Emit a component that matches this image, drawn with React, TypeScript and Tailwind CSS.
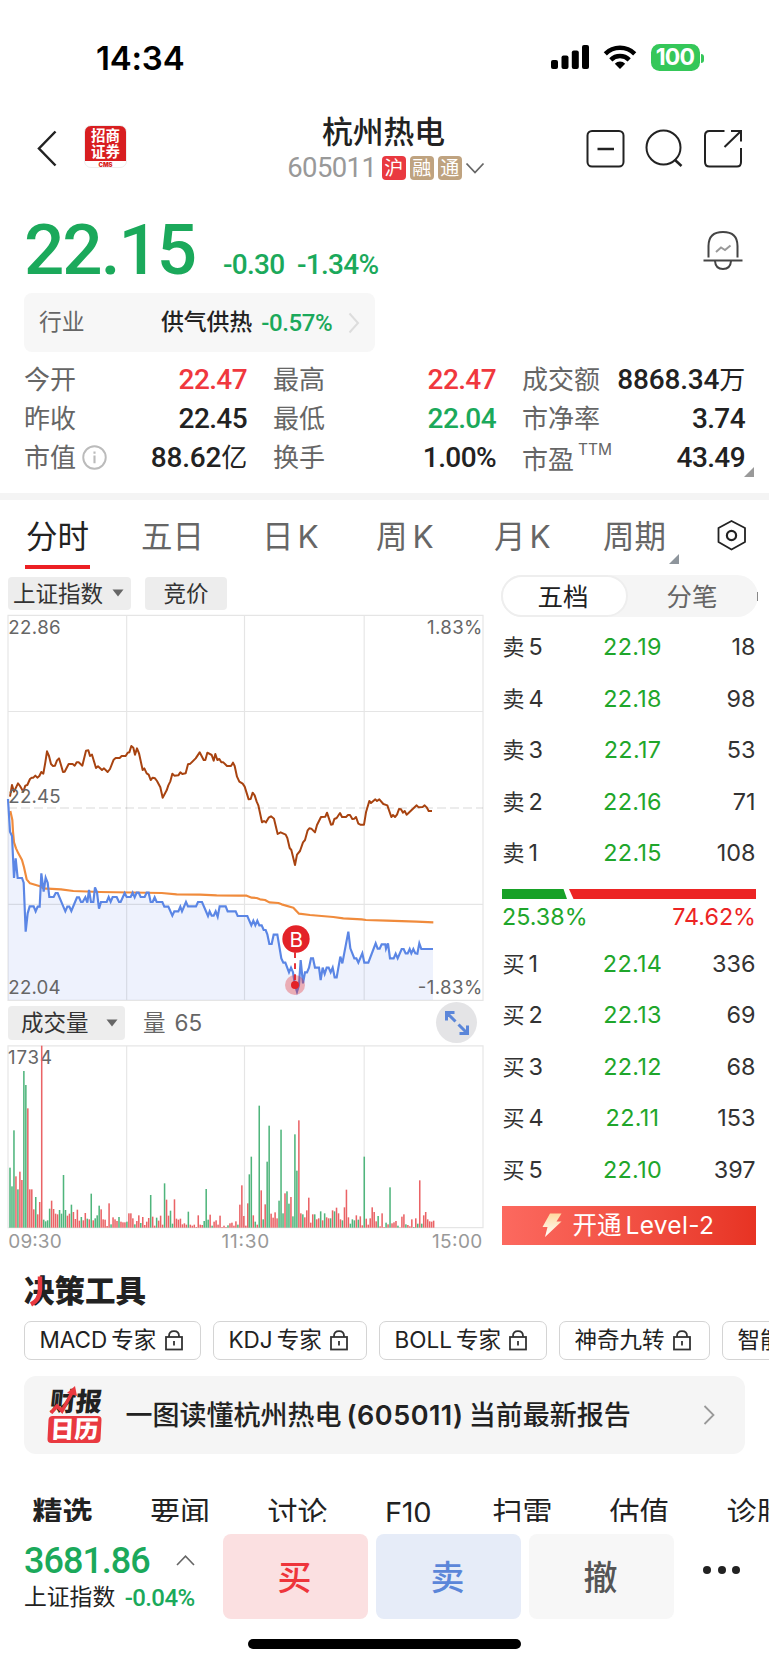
import React from "react";

const SANS = "font-['Inter','Noto_Sans_CJK_SC',sans-serif]";
const NUM = "font-['Roboto','Noto_Sans_CJK_SC',sans-serif]";

const INDEX_AM =
  "30,560 36,525 42,545 54,520 60,528 70,545 76,527 82,525 90,507 95,503 100,503 106,497 112,503 118,498 124,486 130,491 136,457 141,424 147,438 153,462 159,468 165,467 171,451 177,445 183,465 189,486 194,485 206,462 218,462 224,467 230,457 236,457 247,467 258,422 265,421 270,438 276,434 288,474 294,469 306,480 312,475 323,486 330,477 341,449 347,444 359,444 365,438 377,438 383,428 388,427 394,408 400,413 405,434 411,415 417,430 428,480 433,475 440,490 446,494 452,510 458,503 465,505 471,513 481,532 488,563 500,541 505,526 511,514 517,491 523,497 535,496 541,487 547,492 557,490 564,463 571,461 587,445 599,427 611,450 616,450 622,428 635,435 641,452 646,432 652,450 658,447 664,457 670,457 681,468 693,468 699,458 704,468 711,500 718,515";
const INDEX_PM =
  "8,521 14,530 26,568 32,567 38,548 44,556 50,575 55,586 66,637 72,633 78,637 86,623 93,619 102,626 113,672 122,667 137,674 142,684 149,714 154,720 165,765 171,734 180,723 189,697 195,690 203,661 208,655 214,656 225,667 231,645 243,621 256,620 261,608 273,644 278,643 283,627 290,624 300,609 306,621 318,621 324,615 330,615 337,627 343,626 348,621 355,641 361,644 372,644 378,607 388,573 393,579 406,568 411,573 418,568 430,582 442,586 454,621 459,615 465,621 471,614 477,597 483,598 489,608 494,603 500,614 530,586 536,592 548,591 554,586 560,592 566,603 576,603";
const AVG_AM =
  "31,603 37,630 39,665 42,697 48,715 55,730 66,750 72,772 80,808 90,820 120,829 130,835 183,838 220,843 300,846 485,849 530,853 600,854 650,856 715,857";
const AVG_PM =
  "20,857 35,863 50,864 60,868 75,870 88,877 115,879 125,883 160,893 177,911 210,915 280,921 310,925 365,928 378,930 440,932 530,935 580,937";
const PRICE_AM =
  "24,567 30,665 36,678 42,804 47,745 53,804 66,804 71,818 77,965 83,910 89,889 101,889 107,904 113,890 119,890 124,790 131,845 137,803 143,818 148,861 161,861 167,849 173,849 196,904 202,890 208,890 214,903 231,862 237,862 243,876 248,876 256,862 262,878 267,840 273,876 280,876 285,832 291,847 297,896 303,876 320,876 326,861 332,875 338,861 350,861 357,876 362,876 374,849 380,861 392,861 398,848 404,862 410,848 416,848 422,861 434,861 440,848 446,848 452,876 458,876 464,862 470,876 487,876 493,890 505,890 517,917 523,904 535,904 541,890 546,904 558,876 564,889 588,889 594,876 606,876 624,918 629,904 635,917 641,917 647,904 653,920 659,889 677,889 683,904 707,904 713,918";
const PRICE_PM =
  "22,918 34,946 40,932 46,946 52,932 58,946 65,946 71,960 77,960 82,973 88,1002 95,1002 101,974 112,974 124,1045 130,1058 136,1058 147,1087 153,1073 159,1087 165,1125 171,1145 177,1125 182,1050 189,1120 195,1087 201,1087 207,1073 213,1045 219,1045 225,1073 237,1073 242,1110 248,1073 254,1092 260,1073 266,1073 272,1087 278,1073 284,1102 290,1102 301,1040 307,1060 325,965 331,1015 343,1045 349,1045 355,1058 367,1030 373,1058 385,1058 407,1000 413,1016 419,1016 425,1003 436,1003 438,1016 444,1000 450,1045 461,1045 467,1031 473,1045 485,1017 491,1017 497,1030 503,1030 509,1017 514,1030 520,1017 526,1030 532,1031 538,1000 544,1017 579,1017";

const join = (am: string, pm: string) =>
  am + " " + pm.split(" ").map((p) => {
    const [x, y] = p.split(",").map(Number);
    return `${x + 720},${y}`;
  }).join(" ");

const INDEX = join(INDEX_AM, INDEX_PM);
const AVG = join(AVG_AM, AVG_PM);
const PRICE = join(PRICE_AM, PRICE_PM);

const VOL_AM =
  "180g 124g 292g 154r 115g 168r 143r 470g 428g 358r 115r 115r 55r 92g 40r 77r 546r 24g 19g 22g 57g 81r 56r 42r 40r 53g 42g 158g 53g 36r 42r 69g 47r 26r 54r 21r 32g 22r 44r 27g 25r 102g 22r 28g 37g 66g 55r 25r 24r 5r 73r 10g 31r 25r 20r 32g 18r 16r 16r 18g 43r 43r 28r 10g 20r 37r 14g 32r 8r 18r 29r 98g 33r 6r 30g 21r 36r 9r 133g 84r 36r 51g 12g 85r 27r 24r 27r 10r 13r 9r 48g 9r 6r 9r 2r 37r 9r 8r 20g 116g 24g 39r 6g 18r 22r 9r 36r 2r 6r 2r 7g 13r 15r 6r 19r 9g 69r 127r 35r 6r 73r";
const VOL_PM =
  "160g 213g 37r 18g 9r 366g 112r 25g 70r 198g 306g 42r 30r 46r 28r 81g 294g 43g 103r 109g 72g 92r 34g 280g 171g 322r 43r 40g 31r 52r 90r 15r 40r 40g 25r 28r 49g 22r 43g 31r 28r 28g 52r 49g 60r 43r 25r 22g 61r 114r 31r 12g 25g 22g 37r 24g 34r 7r 213g 27r 9r 28r 61r 47r 19r 35g 4r 43r 2r 15g 10r 121g 13r 16r 20r 6g 1r 33r 40r 10g 8r 4r 25r 2g 28r 12g 142r 12g 37r 47r 25r 19r 18r 21r";

function bars(src: string, x0: number) {
  return src.split(" ").map((s, i) => {
    const h = parseInt(s, 10);
    return (
      <rect
        key={x0 + i}
        x={x0 + i * 5.945 - 2.3}
        y={682 - h}
        width={4.6}
        height={h}
        fill={s.endsWith("g") ? "#4fb57c" : "#ea6366"}
      />
    );
  });
}

function StatusBar() {
  return (
    <div className="flex h-[108px] pt-[38px] pl-[96px] pr-[65px] justify-between">
      <div className="h-[40px] text-[33px] leading-[40px] font-semibold text-black tracking-[-0.2px]">14:34</div>
      <div className="flex h-[40px] items-center">
        <svg width="38" height="24" viewBox="0 0 38 24" className="-mt-[2px]">
          <rect x="0" y="15" width="7" height="9" rx="2" />
          <rect x="10.5" y="10.5" width="7" height="13.500" rx="2" />
          <rect x="20.800" y="5.500" width="7" height="18.500" rx="2" />
          <rect x="31" y="0" width="7" height="24" rx="2" />
        </svg>
        <svg width="34" height="25" viewBox="0 0 34 25" className="ml-[14px] -mt-[2px]" fill="none" stroke="#000" strokeWidth="4.500">
          <path d="M2.300 8.800 A21 21 0 0 1 31.700 8.800" />
          <path d="M7.800 14.800 A13.200 13.200 0 0 1 26.200 14.800" />
          <path d="M17 24 L11.800 18.700 A7.500 7.500 0 0 1 22.200 18.700 Z" fill="#000" stroke="none" />
        </svg>
        <div className="ml-[14px] -mt-[1px] flex h-[27px] w-[49px] items-center justify-center rounded-[8.5px] bg-[#35c759] text-[23px] font-bold leading-none text-white tracking-[-0.8px]">100</div>
        <div className="ml-[1.5px] h-[9px] w-[3px] rounded-r-full bg-[#35c759]" />
      </div>
    </div>
  );
}

function Header() {
  const badge = "flex h-[24px] w-[24px] items-center justify-center rounded-[4px] text-[19px] leading-none text-white";
  return (
    <div className="flex h-[92px] pl-[36px] pr-[26px]">
      <svg width="22" height="38" viewBox="0 0 22 38" className="mt-[21px]" fill="none" stroke="#222" strokeWidth="2.500">
        <path d="M19.500 2.500 L3 19.500 L19.500 36.500" />
      </svg>
      <div className="ml-[26px] mt-[17px] flex h-[43px] w-[43px] flex-col items-center overflow-hidden rounded-[7px] border border-[#eee] bg-gradient-to-b from-[#d81e20] from-85% to-white to-85% pt-[2px]">
        <div className="text-[14.500px] font-bold leading-[16px] text-white">招商</div>
        <div className="text-[14.500px] font-bold leading-[16px] text-white">证券</div>
        <div className="mt-[1.500px] text-[6px] font-black leading-[6px] text-[#d81e20]">CMS</div>
      </div>
      <div className="ml-[155px] flex w-[206px] flex-col items-center">
        <div className="-ml-[3px] mt-[4px] h-[39px] text-[30.800px] font-medium leading-[40px] text-[#222]">杭州热电</div>
        <div className={`ml-[2px] flex h-[30px] mt-[2px] items-center gap-[4px] ${NUM}`}>
          <span className="mr-[1.500px] text-[27.500px] leading-[32px] tracking-[-0.600px] text-[#999]">605011</span>
          <span className={`${badge} bg-[#e93940]`}>沪</span>
          <span className={`${badge} bg-[#bfa380]`}>融</span>
          <span className={`${badge} bg-[#bfa380]`}>通</span>
          <svg width="20" height="12" viewBox="0 0 20 12" className="-ml-[1px]" fill="none" stroke="#666" strokeWidth="1.800"><path d="M1.500 1.500 L10 10.500 L18.500 1.500" /></svg>
        </div>
      </div>
      <div className="ml-auto mt-[20px] flex gap-[18.500px]">
        <svg width="40" height="40" viewBox="0 0 40 40" fill="none" stroke="#222" strokeWidth="2">
          <rect x="1.500" y="3" width="36" height="35.500" rx="4.500" /><path d="M11.500 21 H28" strokeWidth="2.500" />
        </svg>
        <svg width="40" height="40" viewBox="0 0 40 40" fill="none" stroke="#222" strokeWidth="2">
          <circle cx="18.500" cy="19.500" r="17" /><path d="M29.500 31.500 L36.500 38" strokeWidth="2.500" />
        </svg>
        <svg width="40" height="40" viewBox="0 0 40 40" fill="none" stroke="#222" strokeWidth="2">
          <path d="M21.500 3 H6.500 Q2 3 2 7.500 V34 Q2 38.500 6.500 38.500 H34 Q38 38.500 38 34 V20" /><path d="M28 3 H38 V13.500 M37.500 3.500 L21.500 19" />
        </svg>
      </div>
    </div>
  );
}

function PriceBlock() {
  return (
    <div className={`flex h-[93px] pl-[24px] pr-[25px] text-[#1ba95b] ${NUM}`}>
      <div className="w-[199px] text-[71px] font-medium leading-[99px] tracking-[-2px]">22.15</div>
      <div className="mt-[45px] w-[74px] text-[28px] leading-[40px] font-medium tracking-[-0.700px]">-0.30</div>
      <div className="mt-[45px] text-[28px] leading-[40px] font-medium tracking-[-0.700px]">-1.34%</div>
      <svg width="42" height="42" viewBox="0 0 42 42" className="ml-auto mt-[30px]" fill="none" stroke="#444" strokeWidth="2">
        <path d="M6.500 27.500 V16 Q6.500 2 21 2 Q35.500 2 35.500 16 V27.500" />
        <path d="M1.500 30.500 H40.500" /><path d="M13 31 Q13.500 39 21 39 Q28.500 39 29 31" />
        <path d="M14 22 L19 17.500 L23 20 L28.500 15.500" stroke="#999" />
      </svg>
    </div>
  );
}

function Stat({ label, value, color = "text-[#222]", unit }: { label: React.ReactNode; value: string; color?: string; unit?: string }) {
  const tracking = unit ? "tracking-[-0.200px]" : "tracking-[-0.600px]";
  return (
    <div className="flex h-[39px] items-center justify-between">
      <span className="flex items-center text-[26px] leading-none text-[#666]">{label}</span>
      <span className={`text-[28px] leading-none font-medium ${tracking} ${NUM} ${color}`}>
        {value}{unit && <span className="text-[26px] font-normal">{unit}</span>}
      </span>
    </div>
  );
}

function Stats() {
  const red = "text-[#f0383e]", green = "text-[#1ba95b]";
  return (
    <div className="relative h-[141px] pl-[24px] pr-[24px]">
      <div className="grid grid-cols-3 gap-x-[26px] pt-[8px]">
        <Stat label="今开" value="22.47" color={red} />
        <Stat label="最高" value="22.47" color={red} />
        <Stat label="成交额" value="8868.34" unit="万" />
        <Stat label="昨收" value="22.45" />
        <Stat label="最低" value="22.04" color={green} />
        <Stat label="市净率" value="3.74" />
        <Stat
          label={<>市值<svg width="25" height="25" viewBox="0 0 26 26" className="ml-[5.500px]" fill="none" stroke="#bbb" strokeWidth="2"><circle cx="13" cy="13" r="11.700" /><path d="M13 11 V19 M13 6.800 V9" strokeWidth="2.200" /></svg></>}
          value="88.62" unit="亿"
        />
        <Stat label="换手" value="1.00%" />
        <Stat label={<span className="mt-[4px] flex">市盈<span className="-mt-[5px] ml-[4px] text-[15.500px] leading-none">TTM</span></span>} value="43.49" />
      </div>
      <svg width="10" height="10" className="absolute left-[744px] top-[115px]"><path d="M10 0 V10 H0 Z" fill="#999" /></svg>
    </div>
  );
}

function PeriodTabs() {
  const t = "text-[31.500px] leading-[74px] text-[#666]";
  return (
    <div className="flex h-[73px] pl-[25px]">
      <div className="w-[116px]">
        <div className="inline-flex h-[69px] flex-col border-b-[4px] border-[#ec2024] px-[1px] text-[31.500px] leading-[74px] text-[#222]">分时</div>
      </div>
      <div className={`${t} w-[121px]`}>五日</div>
      <div className={`${t} w-[114px]`}>日<span className="ml-[4px]">K</span></div>
      <div className={`${t} w-[118px]`}>周<span className="ml-[5px]">K</span></div>
      <div className={`${t} w-[109px]`}>月<span className="ml-[4px]">K</span></div>
      <div className={`${t} flex w-[114px]`}>周期
        <svg width="10" height="10" className="ml-[3px] mt-[54px]"><path d="M10 0 V10 H0 Z" fill="#8e959c" /></svg>
      </div>
      <svg width="30" height="32" viewBox="0 0 30 32" className="mt-[19px]" fill="none" stroke="#222" strokeWidth="1.800">
        <path d="M14.500 2 L28 9 V23 L14.500 30.500 L1.500 23 V9 Z" strokeLinejoin="round" /><circle cx="14.500" cy="16.500" r="4.600" strokeWidth="2.200" />
      </svg>
    </div>
  );
}

const Caret = ({ className = "" }: { className?: string }) => (
  <svg width="12" height="8" className={className}><path d="M0.500 0.500 H11.500 L6 7.500 Z" fill="#666" /></svg>
);

function PriceChart() {
  return (
    <svg width="490" height="392" viewBox="0 0 1470 1176" className="block">
      <polygon points={`24,1170 ${PRICE} 1299,1170`} fill="#eef2fd" />
      <g stroke="#000" strokeOpacity="0.100" strokeWidth="3.500" fill="none">
        <path d="M24 16 H1449 V1171 H24 Z M24 304.500 H1449 M24 883 H1449 M380 16 V1171 M733.500 16 V1171 M1092.500 16 V1171" />
        <path d="M24 594 H1449" strokeDasharray="27 12" strokeWidth="5" />
      </g>
      <polyline points={INDEX} fill="none" stroke="#a84310" strokeWidth="6" strokeLinejoin="round" />
      <polyline points={AVG} fill="none" stroke="#f08b3c" strokeWidth="6.500" strokeLinejoin="round" />
      <polyline points={PRICE} fill="none" stroke="#5b86e5" strokeWidth="6.500" />
      <circle cx="885" cy="1125" r="30" fill="#e32228" fillOpacity="0.330" />
      <circle cx="885" cy="1125" r="12" fill="#e32228" />
      <path d="M885 1027 V1125" stroke="#e32228" strokeWidth="5.500" strokeDasharray="17 16" />
      <circle cx="888" cy="987" r="41" fill="#e32228" />
      <g className={SANS} fontSize="56" fill="#666">
        <text x="889" y="1010" textAnchor="middle" fill="#fff" fontSize="62">B</text>
        <text x="25" y="71" textLength="157">22.86</text>
        <text x="25" y="578" textLength="157">22.45</text>
        <text x="25" y="1152" textLength="157">22.04</text>
        <text x="1281" y="71" textLength="166">1.83%</text>
        <text x="1253" y="1152" textLength="194">-1.83%</text>
      </g>
    </svg>
  );
}

function VolumeChart() {
  return (
    <svg width="490" height="215" viewBox="0 128 1470 645" className="block">
      <path d="M24 136.500 H1449 V682 H24 Z M380 136 V682 M733.500 136 V682 M1092.500 136 V682" fill="none" stroke="#000" strokeOpacity="0.100" strokeWidth="3.500" />
      <g className={SANS} fontSize="56" fill="#666"><text x="24" y="191" textLength="132">1734</text></g>
      {bars(VOL_AM, 30)}
      {bars(VOL_PM, 748)}
      <g className={SANS} fontSize="57" fill="#999">
        <text x="25" y="744" textLength="160">09:30</text>
        <text x="736" y="744" textAnchor="middle" textLength="143">11:30</text>
        <text x="1296" y="744" textLength="151">15:00</text>
      </g>
    </svg>
  );
}

function ChartColumn() {
  return (
    <div className="w-[490px]">
      <div className="flex h-[37px] pl-[8px] pt-[4px] gap-[14px] text-[22.500px] leading-[33px] text-[#333]">
        <div className="flex h-[32.500px] w-[123px] items-center rounded-[4px] bg-[#ededed] pl-[5px]">上证指数<Caret className="ml-[9px]" /></div>
        <div className="h-[32.500px] w-[82px] rounded-[4px] bg-[#ededed] text-center">竞价</div>
      </div>
      <PriceChart />
      <div className="flex h-[41px] items-center pl-[8px] text-[22.500px] text-[#333]">
        <div className="mt-[1px] flex h-[34px] w-[117px] items-center rounded-[4px] bg-[#ededed] pl-[13px]">成交量<Caret className="ml-[17px]" /></div>
        <div className="ml-[18px] mt-[1px] text-[#666]">量<span className="ml-[9px]">65</span></div>
        <div className="mr-[13px] ml-auto flex h-[41px] w-[41px] items-center justify-center rounded-full bg-[#e4e4e6]">
          <svg width="24" height="24" viewBox="0 0 24 24" fill="none" stroke="#5b86d9" strokeWidth="3">
            <path d="M1.500 9.500 V1.500 H9.500 M2 2 L10.500 10.500 M22.500 14.500 V22.500 H14.500 M22 22 L13.500 13.500" />
          </svg>
        </div>
      </div>
      <VolumeChart />
    </div>
  );
}

function Book({ side, rows }: { side: string; rows: [number, string, number][] }) {
  return (
    <div>
      {rows.map(([n, p, v]) => (
        <div key={n} className="flex h-[51.500px] items-center text-[23.400px] leading-none text-[#333]">
          <span className="w-[80px] pl-[1px] text-[22px]">{side}<span className="ml-[4px] text-[23.400px]">{n}</span></span>
          <span className="w-[102px] text-center tracking-[0.300px] text-[#1fa62b]">{p}</span>
          <span className="flex-1 pr-[0.500px] text-right">{v}</span>
        </div>
      ))}
    </div>
  );
}

function OrderColumn() {
  return (
    <div className="w-[258px] pl-[11.500px]">
      <div className="-ml-[1px] mt-[2px] flex h-[42px] w-[257px] rounded-full bg-[#f5f5f5] text-[25.500px]">
        <div className="h-[42px] w-[127px] rounded-full border-2 border-[#eee] bg-white pr-[2px] text-center leading-[39px] text-[#222]">五档</div>
        <div className="flex-1 text-center leading-[43px] text-[#666]">分笔</div>
        <div className="mt-[17px] h-[9px] w-px bg-[#888]" />
      </div>
      <div className="w-[254.500px]">
        <div className="pt-[4px]"><Book side="卖" rows={[[5, "22.19", 18], [4, "22.18", 98], [3, "22.17", 53], [2, "22.16", 71], [1, "22.15", 108]]} /></div>
        <svg width="254" height="10" className="mt-[10.500px] block">
          <path d="M0 0 H61.500 L65 10 H0 Z" fill="#17a127" /><path d="M67 0 H254 V10 H71.500 Z" fill="#ec2424" />
        </svg>
        <div className="mt-[4px] flex h-[28px] items-center justify-between pl-[0.500px] text-[23.300px]">
          <span className="text-[#1fa62b]">25.38%</span><span className="text-[#ec2424]">74.62%</span>
        </div>
        <div className="pt-[6.500px]"><Book side="买" rows={[[1, "22.14", 336], [2, "22.13", 69], [3, "22.12", 68], [4, "22.11", 153], [5, "22.10", 397]]} /></div>
        <div className="mt-[10.500px] flex h-[39px] w-[254px] items-center bg-gradient-to-r from-[#fc695f] to-[#e73323] pl-[40px] text-[24.500px] leading-none text-white">
          <svg width="20" height="24" viewBox="0 0 20 24" className="mr-[11px]"><defs><linearGradient id="bolt" x1="0" x2="0" y1="0" y2="1"><stop offset="0" stopColor="#ffd9a0" /><stop offset="1" stopColor="#fff" /></linearGradient></defs><path d="M8 0.500 H19.500 L14.500 8.500 H19.500 L3 24 L5.500 14 H0.500 Z" fill="url(#bolt)" /></svg>
          开通<span className="ml-[4px] tracking-[0.300px]">Level-2</span>
        </div>
      </div>
    </div>
  );
}

function ToolChip({ latin, label, w }: { latin?: string; label: string; w: string }) {
  return (
    <div className={`flex h-[39px] shrink-0 items-center whitespace-nowrap rounded-[7px] border-[1.500px] border-[#d4d4d4] pl-[14.500px] text-[22.500px] leading-none text-[#222] ${w}`}>
      {latin && <span className="mr-[4px]">{latin}</span>}{label}
      <svg width="18" height="21" viewBox="0 0 18 21" className="ml-[8.500px] shrink-0" fill="none" stroke="#333" strokeWidth="1.800"><rect x="1" y="7" width="16" height="12.500" /><path d="M4 7 V6 Q4 1.200 9 1.200 Q14 1.200 14 6 V7 M9 11 V15.500" /></svg>
    </div>
  );
}

function Tools() {
  return (
    <div className="h-[217px] overflow-hidden pl-[24px] pt-[1px]">
      <div className="relative h-[61px] text-[30.500px] font-black leading-[62px] text-[#222]">
        决策工具
        <svg width="30" height="32" viewBox="0 0 30 32" className="absolute -left-[1px] top-[15px]" fill="none" stroke="#e93940" strokeWidth="4.500"><path d="M17 1.500 V15 Q16.500 25 8 29.500" /></svg>
      </div>
      <div className="flex gap-[12px]">
        <ToolChip latin="MACD" label="专家" w="w-[177px]" />
        <ToolChip latin="KDJ" label="专家" w="w-[154px]" />
        <ToolChip latin="BOLL" label="专家" w="w-[168px]" />
        <ToolChip label="神奇九转" w="w-[151px]" />
        <ToolChip label="智能盯盘" w="w-[151px]" />
      </div>
      <div className="mt-[16px] flex h-[78px] w-[721px] items-center rounded-[12px] bg-[#f5f5f5] pl-[24px]">
        <div className="relative w-[56px]">
          <div className="h-[27px] -skew-x-6 pl-[2px] text-[26px] font-black leading-[27px] text-[#222]">财报</div>
          <div className="mt-[1px] flex h-[27px] w-[53px] -skew-x-3 items-center justify-center rounded-[4px] bg-[#e93940] text-[24px] font-black leading-none text-white">日历</div>
          <svg width="30" height="28" viewBox="0 0 30 28" className="absolute left-[1px] -top-[2px]" fill="none" stroke="#e93940" strokeWidth="3.500"><path d="M2 27 L8 20 L13 25 L24 5" /><path d="M18 7 L26 0 L28 10 Z" fill="#e93940" stroke="none" /></svg>
        </div>
        <div className="ml-[21.500px] whitespace-nowrap text-[27px] font-medium leading-none text-[#222]">一图读懂杭州热电<span className="mx-[5px] font-semibold tracking-[0.500px]">(605011)</span>当前最新报告</div>
        <svg width="12" height="20" viewBox="0 0 12 20" className="ml-auto mr-[30px]" fill="none" stroke="#999" strokeWidth="1.800"><path d="M1.500 1 L10.500 10 L1.500 19" /></svg>
      </div>
    </div>
  );
}

function NewsTabs() {
  return (
    <div className="mt-[7px] flex h-[39px] overflow-hidden whitespace-nowrap pl-[32.500px] text-[30px] leading-[59px] text-[#222]">
      <div className="w-[117.500px] shrink-0 font-bold">精选</div>
      <div className="w-[117.500px] shrink-0">要闻</div>
      <div className="w-[117.500px] shrink-0">讨论</div>
      <div className="w-[107.500px] shrink-0 text-[29px] tracking-[-0.300px]">F10</div>
      <div className="w-[117px] shrink-0">扫雷</div>
      <div className="w-[117px] shrink-0">估值</div>
      <div className="w-[117px] shrink-0">诊股</div>
    </div>
  );
}

function BottomBar() {
  const b = "flex h-[85.500px] w-[145px] items-center justify-center rounded-[8px] pr-[2px] pt-[4px] text-[34px] font-medium leading-none";
  return (
    <div className="flex pl-[24px] pt-[11.500px]">
      <div className="w-[199px]">
        <div className={`flex h-[54px] items-center ${NUM}`}>
          <span className="w-[152px] pt-[1px] text-[36px] font-medium leading-none tracking-[-1px] text-[#1ba95b]">3681.86</span>
          <svg width="19" height="11" viewBox="0 0 19 11" className="-mt-[1px]" fill="none" stroke="#666" strokeWidth="1.600"><path d="M1 10 L9.500 1.200 L18 10" /></svg>
        </div>
        <div className="flex h-[20px] items-center whitespace-nowrap text-[22.800px] leading-none text-[#222]">上证指数<span className={`ml-[9.500px] font-medium text-[24px] tracking-[-0.600px] text-[#1ba95b] ${NUM}`}>-0.04%</span></div>
      </div>
      <div className="flex gap-[8px]">
        <div className={`${b} bg-[#fbe0e1] text-[#ee353b]`}>买</div>
        <div className={`${b} bg-[#e6ecf8] text-[#5b86d9]`}>卖</div>
        <div className={`${b} bg-[#f7f7f7] text-[#555]`}>撤</div>
      </div>
      <div className="ml-[29px] mt-[32px] flex gap-[6.500px]">
        <div className="h-[8px] w-[8px] rounded-full bg-[#222]" /><div className="h-[8px] w-[8px] rounded-full bg-[#222]" /><div className="h-[8px] w-[8px] rounded-full bg-[#222]" />
      </div>
    </div>
  );
}

export default function App() {
  return (
    <div className={`h-[1665px] w-[769px] overflow-hidden bg-white ${SANS}`}>
      <StatusBar />
      <Header />
      <PriceBlock />
      <div className="ml-[24px] flex h-[59px] w-[351px] items-center rounded-[8px] bg-[#f7f7f7] pl-[15px] pr-[15px] text-[22.800px] leading-none">
        <span className="w-[122px] text-[#666]">行业</span>
        <span className="font-medium text-[#222]">供气供热</span>
        <span className={`ml-[9px] pt-[1px] text-[24px] font-medium tracking-[-0.400px] text-[#1ba95b] ${NUM}`}>-0.57%</span>
        <svg width="12" height="22" viewBox="0 0 12 22" className="ml-auto" fill="none" stroke="#ddd" strokeWidth="2"><path d="M1.500 1.500 L10 11 L1.500 20.500" /></svg>
      </div>
      <Stats />
      <div className="h-[7px] bg-[#f4f4f4]" />
      <PeriodTabs />
      <div className="flex h-[686px]">
        <ChartColumn />
        <OrderColumn />
      </div>
      <Tools />
      <NewsTabs />
      <BottomBar />
      <div className="mx-auto mt-[20px] h-[10px] w-[273px] rounded-full bg-black" />
    </div>
  );
}
